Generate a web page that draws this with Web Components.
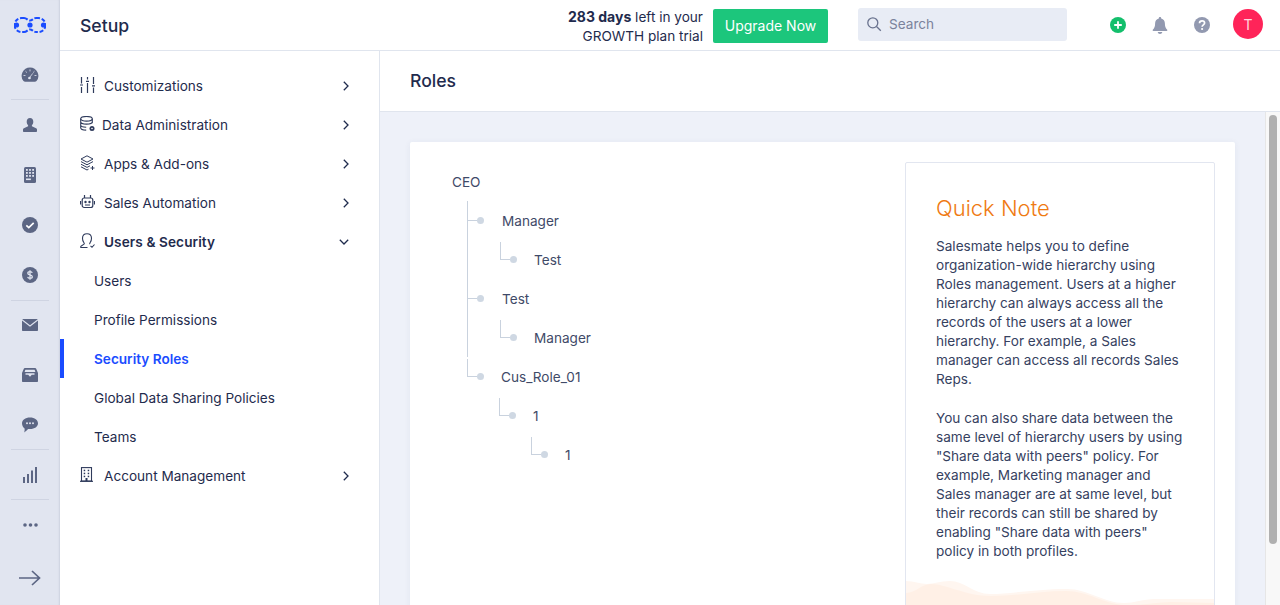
<!DOCTYPE html>
<html lang="en"><head><meta charset="utf-8"><title>Roles</title>
<style>
html,body{margin:0;height:605px;overflow:hidden;background:#fff;font-family:Inter,"Liberation Sans",sans-serif;-webkit-font-smoothing:antialiased}
</style></head>
<body>
<app-shell>
  <app-rail slot="rail"></app-rail>
  <app-topbar slot="top"></app-topbar>
  <setup-menu slot="menu"></setup-menu>
  <roles-page slot="main"></roles-page>
</app-shell>
<script>
function el(name, html, css){
  customElements.define(name, class extends HTMLElement{
    connectedCallback(){ if(this.shadowRoot) return;
      const r=this.attachShadow({mode:'open'});
      r.innerHTML='<style>'+css+'</style>'+(typeof html==='function'?html(this):html);
    }
  });
}
el('app-shell',`<div class="wrap"><slot name="rail"></slot><div class="right"><slot name="top"></slot><div class="body"><slot name="menu"></slot><slot name="main"></slot></div></div></div>`,
`:host{display:block;height:605px;overflow:hidden;color:#1f2b4d}
.wrap{display:flex;height:605px}.right{flex:1;min-width:0;display:flex;flex-direction:column}
.body{flex:1;min-height:0;display:flex}`);

const R='#5c6684';
const railIcons={
logo:`<svg width="32" height="18" viewBox="0 0 32 18"><g fill="none" stroke="#1a4cff" stroke-width="2" stroke-dasharray="4 1.800"><path d="M10 2H7.500a7 7 0 0 0-7 7M.5 9a7 7 0 0 0 7 7H10"/><path d="M22 2h2.500a7 7 0 0 1 7 7M31.500 9a7 7 0 0 1-7 7H22"/><path d="M10 2c3 0 3.500 2.600 6 2.600S19 2 22 2M10 16c3 0 3.500-2.600 6-2.600S19 16 22 16"/></g><circle cx="2.500" cy="9" r="2.600" fill="#1a4cff"/><circle cx="16" cy="9" r="2.600" fill="#1a4cff"/><circle cx="29.500" cy="9" r="2.600" fill="#1a4cff"/></svg>`,
gauge:`<svg width="18" height="16" viewBox="0 0 18 16"><path fill="${R}" fill-rule="evenodd" d="M9 .5a8.300 8.300 0 0 0-6.500 13.500c.4.500 1 .8 1.700.8h9.600c.7 0 1.300-.3 1.700-.8A8.300 8.300 0 0 0 9 .5Z"/><g fill="none" stroke="#e1e5f0" stroke-width=".8" stroke-linecap="round"><path d="M9 2.800v1.200M4.800 4.500l.8.8M13.200 4.500l-.8.8M2.900 8.500h1.200M13.900 8.500h1.200M8 11.300l3.500-4.600"/></g><circle cx="8.500" cy="11" r="1.300" fill="#e1e5f0"/></svg>`,
person:`<svg width="14" height="14" viewBox="0 0 14 14"><path fill="${R}" d="M7 0C4.900 0 3.700 1.700 3.700 3.700c0 1.400.5 2.700 1.400 3.500v1.100L.9 10.200C.300 10.500 0 11 0 11.600V13c0 .6.400 1 1 1h12c.6 0 1-.4 1-1v-1.400c0-.6-.3-1.100-.9-1.400L8.900 8.300V7.200c.9-.8 1.400-2.100 1.400-3.500C10.300 1.700 9.100 0 7 0Z"/></svg>`,
calc:`<svg width="12" height="16" viewBox="0 0 12 16"><rect width="12" height="16" rx="1.500" fill="${R}"/><g fill="#dfe3ee"><rect x="2" y="2" width="1.800" height="1.800"/><rect x="5.100" y="2" width="1.800" height="1.800"/><rect x="8.200" y="2" width="1.800" height="1.800"/><rect x="2" y="5" width="1.800" height="1.800"/><rect x="5.100" y="5" width="1.800" height="1.800"/><rect x="8.200" y="5" width="1.800" height="1.800"/><rect x="2" y="8" width="1.800" height="1.800"/><rect x="5.100" y="8" width="1.800" height="1.800"/><rect x="8.200" y="8" width="1.800" height="1.800"/><rect x="2" y="11.500" width="4.900" height="1.600"/></g></svg>`,
check:`<svg width="16" height="16" viewBox="0 0 16 16"><circle cx="8" cy="8" r="8" fill="${R}"/><path d="M4.300 8.300l2.500 2.300 4.900-4.700" fill="none" stroke="#fff" stroke-width="1.700"/></svg>`,
dollar:`<svg width="16" height="16" viewBox="0 0 16 16"><circle cx="8" cy="8" r="8" fill="${R}"/><path d="M10.200 5.900C10 5 9.100 4.700 8 4.700c-1.300 0-2.200.6-2.200 1.600 0 2.300 4.500 1 4.500 3.400 0 1-1 1.600-2.300 1.600-1.200 0-2.100-.5-2.300-1.400M8 3.300v9.400" fill="none" stroke="#e1e5f0" stroke-width="1.300"/></svg>`,
mail:`<svg width="16" height="12" viewBox="0 0 16 12"><path fill="${R}" d="M1 0h14c.3 0 .5.100.7.300L8 6.300.3.300C.5.100.7 0 1 0ZM0 1.600l8 6.200 8-6.200V11c0 .6-.4 1-1 1H1c-.6 0-1-.4-1-1Z"/></svg>`,
inbox:`<svg width="16" height="14" viewBox="0 0 16 14"><path fill="${R}" fill-rule="evenodd" d="M3 0h10c.6 0 1 .3 1.200.8L16 5v8c0 .6-.4 1-1 1H1c-.6 0-1-.4-1-1V5L1.800.8C2 .3 2.400 0 3 0Zm.4 1.700L2.600 4h10.800l-.8-2.300ZM3.500 5.300v1.500h2.700L8 8.800l1.800-2h2.700V5.300Z"/></svg>`,
chat:`<svg width="18" height="16" viewBox="0 0 18 16"><path fill="${R}" d="M9 .5c4.700 0 8 2.600 8 5.800 0 3.300-3.300 5.800-8 5.800-.7 0-1.300 0-1.900-.1C5.900 13.300 4.300 14.800 3 15.500c.6-1.100.7-2.300.6-4C2 10.300 1 8.500 1 6.300 1 3.100 4.300.5 9 .5Z"/><g fill="#dfe3ee"><circle cx="6" cy="6.300" r="1"/><circle cx="9" cy="6.300" r="1"/><circle cx="12" cy="6.300" r="1"/></g></svg>`,
bars:`<svg width="14" height="16" viewBox="0 0 14 16"><g fill="${R}"><rect x="0" y="10" width="2" height="6"/><rect x="4" y="7" width="2" height="9"/><rect x="8" y="3.500" width="2" height="12.500"/><rect x="12" y="0" width="2" height="16"/></g></svg>`,
dots:`<svg width="15" height="4" viewBox="0 0 15 4"><g fill="${R}"><circle cx="2" cy="2" r="1.800"/><circle cx="7.500" cy="2" r="1.800"/><circle cx="13" cy="2" r="1.800"/></g></svg>`,
arrow:`<svg width="22" height="16" viewBox="0 0 22 16"><path d="M0 8h20.500M13 1l7.500 7-7.500 7" fill="none" stroke="${R}" stroke-width="1.700"/></svg>`};
el('rail-item',h=>railIcons[h.getAttribute('icon')],
`:host{display:flex;align-items:center;justify-content:center;height:50px;position:relative;flex:none}
:host([sep])::after{content:"";position:absolute;left:11px;right:11px;bottom:var(--b,0);height:1px;background:#cfd4e2}
:host([end]){margin-top:auto;height:56px}svg{display:block}
:host([icon=logo]) svg{margin-top:-1px}:host([end]) svg{margin-top:-1px}`);
el('app-rail',`<rail-item icon="logo"></rail-item><rail-item icon="gauge" sep></rail-item><rail-item icon="person"></rail-item><rail-item icon="calc"></rail-item><rail-item icon="check"></rail-item><rail-item icon="dollar" sep style="--b:-1px"></rail-item><rail-item icon="mail"></rail-item><rail-item icon="inbox"></rail-item><rail-item icon="chat" sep></rail-item><rail-item icon="bars" sep></rail-item><rail-item icon="dots"></rail-item><rail-item icon="arrow" end></rail-item>`,
`:host{display:flex;flex-direction:column;flex:none;width:60px;height:605px;background:#e1e5f0;box-shadow:inset -2px 0 2px -1px #ccd1df}`);

el('app-topbar',`<h1>Setup</h1><div class="trial"><b>283 days</b> left in your<br>GROWTH plan trial</div><button>Upgrade Now</button>
<div class="search"><svg width="16" height="16" viewBox="0 0 16 16"><circle cx="6.800" cy="6.800" r="5" fill="none" stroke="#69728e" stroke-width="1.300"/><path d="M10.500 10.500l4.300 4.300" stroke="#69728e" stroke-width="1.300"/></svg><span>Search</span></div>
<div class="ic plus"><svg width="16" height="16" viewBox="0 0 16 16"><circle cx="8" cy="8" r="8" fill="#13bf6c"/><path d="M8 4.200v7.600M4.200 8h7.600" stroke="#fff" stroke-width="1.800"/></svg></div>
<div class="ic bell"><svg width="16" height="17" viewBox="0 0 16 17"><path fill="#9299b0" d="M8 0c.7 0 1.200.5 1.200 1.200v.4c2.400.6 3.700 2.500 3.700 5 0 3 .6 4.500 2.300 6.200.4.400.1 1.200-.5 1.200H1.300c-.6 0-.9-.8-.5-1.200C2.500 11.100 3.100 9.600 3.100 6.600c0-2.500 1.300-4.400 3.700-5v-.4C6.800.5 7.300 0 8 0ZM5.700 15h4.600c-.2 1.200-1.100 2-2.300 2s-2.100-.8-2.300-2Z"/></svg></div>
<div class="ic help"><svg width="16" height="16" viewBox="0 0 16 16"><circle cx="8" cy="8" r="8" fill="#9299b0"/><path d="M5.500 6.200c0-1.500 1.100-2.400 2.600-2.400s2.500.9 2.500 2.200c0 1.900-2.500 1.900-2.500 3.800" fill="none" stroke="#fff" stroke-width="1.700"/><circle cx="8.100" cy="12" r="1.100" fill="#fff"/></svg></div>
<div class="av">T</div>`,
`:host{display:flex;align-items:center;height:50px;box-sizing:content-box;border-bottom:1px solid #e0e5ee;padding-left:20px;background:#fff;font-size:13.6px;flex:none}
h1{margin:0;font-size:17.6px;font-weight:500;color:#1f2b4d;flex:1}
.trial{text-align:right;line-height:19px;color:#1f2b4d;margin-right:10px;position:relative;top:1px}b{font-weight:700;font-size:14px}
button{all:unset;box-sizing:border-box;width:115px;height:34px;padding-bottom:2px;background:#1cc67c;color:#fff;border-radius:2px;text-align:center;font-size:14px;font-weight:400;margin-right:30px;position:relative;top:1px}
.search{width:209px;height:33px;border-radius:3px;background:#e8ecf5;display:flex;align-items:center;gap:7px;padding-left:8px;box-sizing:border-box;color:#7b839c;margin-right:43px;position:relative;top:-1px}
.ic{width:16px;height:17px;display:flex;align-items:center;justify-content:center;margin-right:26px}
.av{width:30px;height:30px;border-radius:50%;background:#ff2459;color:#ffd7df;display:flex;align-items:center;justify-content:center;font-size:14px;margin:0 17px 0 -3px;position:relative;top:-1px}svg{display:block}`);

const S='#2f3b5c';
const menuIcons={
sliders:`<svg width="15" height="16" viewBox="0 0 15 16"><g fill="none" stroke="${S}" stroke-width="1.200"><path d="M1.500 0v6.500M1.500 10v6M7.500 0v2.500M7.500 6v10M13.500 0v7M13.500 10.500V16M0 8h3M6 4.300h3M12 8.800h3"/></g></svg>`,
db:`<svg width="15" height="16" viewBox="0 0 15 16"><g fill="none" stroke="${S}" stroke-width="1.100"><ellipse cx="6.500" cy="2.800" rx="5.800" ry="2.300"/><path d="M.7 2.800v9c0 1.300 2.500 2.300 5.500 2.300M12.300 2.800v4.500M.7 5.800c0 1.300 2.500 2.300 5.800 2.300s5.800-1 5.800-2.300M.7 9c0 1.200 2.500 2.200 5.500 2.200"/></g><circle cx="12" cy="12.500" r="2.500" fill="${S}"/><circle cx="12" cy="12.500" r=".8" fill="#fff"/></svg>`,
stack:`<svg width="15" height="16" viewBox="0 0 15 16"><g fill="none" stroke="${S}" stroke-width="1"><path d="M7 .8l6 3.200-6 3.200L1 4Z"/><path d="M1 6.600l6 3.200 6-3.200M1 9.200l6 3.200 3-1.600M1 11.800l6 3.200 1.500-.8M12.500 11v4M10.500 13h4"/></g></svg>`,
bot:`<svg width="15" height="15" viewBox="0 0 15 15"><g fill="none" stroke="${S}" stroke-width="1.200"><rect x="2.200" y="4" width="10.600" height="9.500" rx="2"/><path d="M4.500 4V1M10.500 4V1M.5 7v3.500M14.500 7v3.500"/></g><circle cx="5.500" cy="8" r="1.200" fill="${S}"/><circle cx="9.500" cy="8" r="1.200" fill="${S}"/><path d="M5 11h5" stroke="${S}"/></svg>`,
user:`<svg width="15" height="16" viewBox="0 0 15 16"><path fill="none" stroke="${S}" stroke-width="1.100" d="M.5 14.500h7M.5 14.500c0-2 2-2 3.500-3.300.5-.5.3-1-.2-1.700C2.800 8.300 2.500 6.800 2.500 5.300 2.500 2.500 4.500.7 7 .7s4.500 1.800 4.500 4.600c0 1.500-.4 3-1.300 4.200-.5.700-.7 1.200-.2 1.700M10.500 12.800l1.500 1.500 2.500-2.800"/></svg>`,
building:`<svg width="13" height="15" viewBox="0 0 13 15"><rect x="1.500" y=".6" width="10" height="13.500" fill="none" stroke="${S}" stroke-width="1.100"/><path d="M0 14.300h13" stroke="${S}" stroke-width="1.200"/><g fill="${S}"><rect x="3.700" y="2.700" width="1.500" height="1.500"/><rect x="7.700" y="2.700" width="1.500" height="1.500"/><rect x="3.700" y="5.700" width="1.500" height="1.500"/><rect x="7.700" y="5.700" width="1.500" height="1.500"/><rect x="3.700" y="8.700" width="1.500" height="1.500"/><rect x="7.700" y="8.700" width="1.500" height="1.500"/><rect x="5.500" y="11" width="2" height="3"/></g></svg>`};
el('menu-row',h=>{
  const ic=h.getAttribute('icon'),open=h.hasAttribute('open');
  const chev=open?`<svg width="10" height="6" viewBox="0 0 10 6" class="d"><path d="M.8.800L5 5l4.200-4.200" fill="none" stroke="#1f2b4d" stroke-width="1.300"/></svg>`
    :`<svg width="6" height="10" viewBox="0 0 6 10"><path d="M.8.800L5 5 .8 9.200" fill="none" stroke="#1f2b4d" stroke-width="1.300"/></svg>`;
  return ic?`<span class="i" style="width:${h.getAttribute('w')||24}px">${menuIcons[ic]}</span><span class="t"><slot></slot></span>${chev}`:`<span class="t"><slot></slot></span>`;
},
`:host{display:flex;align-items:center;height:39px;padding-left:20px;padding-right:30px;font-size:13.6px;color:#1f2b4d;position:relative;box-sizing:border-box}
.i{flex:none;display:flex;align-items:center;height:100%}.i svg{display:block;margin-top:-2px}
.t{flex:1}svg.d{margin-right:0}
:host([sub]){padding-left:34px}
:host([open]){font-weight:600;letter-spacing:.1px}
:host([active]){color:#1a4cff;font-weight:600}
:host([active])::before{content:"";position:absolute;left:0;top:0;bottom:0;width:4px;background:#1a4cff}`);
el('setup-menu',`<menu-row icon="sliders">Customizations</menu-row><menu-row icon="db" w="22">Data Administration</menu-row><menu-row icon="stack">Apps &amp; Add-ons</menu-row><menu-row icon="bot">Sales Automation</menu-row><menu-row icon="user" open>Users &amp; Security</menu-row><menu-row sub>Users</menu-row><menu-row sub>Profile Permissions</menu-row><menu-row sub active>Security Roles</menu-row><menu-row sub>Global Data Sharing Policies</menu-row><menu-row sub>Teams</menu-row><menu-row icon="building">Account Management</menu-row>`,
`:host{display:block;flex:none;width:320px;box-sizing:border-box;border-right:1px solid #e0e5ee;padding-top:15px;background:#fff}`);

el('role-node',h=>`<span class="c"></span><i></i><span class="l"><slot></slot></span>`,
`:host{display:flex;align-items:center;height:39px;position:relative;font-size:13.6px;color:#3f4a68;padding-left:calc(var(--x) * 1px)}
.c{position:absolute;left:calc(var(--x) * 1px);bottom:19px;width:10px;height:18px;border-left:1px solid #c9d2de;border-bottom:1px solid #c9d2de;box-sizing:border-box}
:host([flat]) .c{height:1px;border-left:0}
i{width:7px;height:7px;border-radius:50%;background:#cfd8e3;margin-left:10px;margin-right:var(--g,18px);flex:none}
:host([root]) .c,:host([root]) i{display:none}:host([root]){padding-left:0}`);
el('role-tree',`<div class="spine"></div><slot></slot>`,
`:host{display:block;position:relative;padding:20px 0 0 42px}
.spine{position:absolute;left:57px;top:59px;height:156px;width:1px;background:#c9d2de}`);
el('quick-note',`<h2>Quick Note</h2><p>Salesmate helps you to define organization-wide hierarchy using Roles management. Users at a higher hierarchy can always access all the records of the users at a lower hierarchy. For example, a Sales manager can access all records Sales Reps.</p><p>You can also share data between the same level of hierarchy users by using "Share data with peers" policy. For example, Marketing manager and Sales manager are at same level, but their records can still be shared by enabling "Share data with peers" policy in both profiles.</p>
<svg class="w" width="308" height="40" viewBox="0 0 308 40" preserveAspectRatio="none"><path fill="#fff6f0" d="M0 0C8 0 14 3 21 3 28 3 34 0 44 0 58 0 68 13 84 13 105 13 130 8 161 8 182 8 198 22 218 22 228 22 238 18 248 18 268 18 285 18 308 18V40H0Z"/><path fill="#fff0e6" d="M0 12C10 12 15 3 25 3 40 3 60 15 85 15 110 15 135 10 160 10 182 10 198 23 218 24 235 25 250 21 265 21 280 21 295 22 308 22V40H0Z"/></svg>`,
`:host{display:block;flex:none;width:310px;box-sizing:border-box;border:1px solid #e2e6f0;border-radius:2px;padding:0 30px;overflow:hidden;font-size:13.6px;line-height:19px;color:#36415f}
h2{margin:28px 0 12px;font-size:22px;line-height:34px;font-weight:300;color:#ef7a12}
p{margin:0 0 20px}.w{display:block;margin:5px -30px 0}`);
el('roles-page',`<header>Roles</header><section><div class="card"><role-tree><role-node root style="--x:0">CEO</role-node><role-node flat style="--x:15">Manager</role-node><role-node style="--x:48;--g:17px">Test</role-node><role-node flat style="--x:15">Test</role-node><role-node style="--x:48;--g:17px">Manager</role-node><role-node style="--x:15;--g:17px">Cus_Role_01</role-node><role-node style="--x:47;--g:17px">1</role-node><role-node style="--x:79;--g:17px">1</role-node></role-tree><quick-note></quick-note></div></section><div class="sb"><b></b></div>`,
`:host{display:block;flex:1;min-width:0;position:relative;overflow:hidden;background:#eef1f9}
header{box-sizing:content-box;height:59px;padding-bottom:1px;padding-left:30px;background:#fff;border-bottom:1px solid #e0e5ee;display:flex;align-items:center;font-size:17.6px;font-weight:500;color:#1f2b4d}
section{padding:30px 45px 0 30px}
.card{background:#fff;box-shadow:0 1px 6px rgba(60,70,110,.07);display:flex;justify-content:space-between;padding:20px 20px 0 0;height:520px;border-radius:2px}
role-tree{flex:1;margin-top:-20px}
.sb{position:absolute;right:0;top:61px;bottom:0;width:15px;background:#f8f8f8;border-left:1px solid #e6e6e6;box-sizing:border-box}
.sb b{display:block;position:absolute;left:3px;right:3px;top:3px;height:429px;border-radius:5px;background:#b0b0b0}`);
</script>
</body></html>
